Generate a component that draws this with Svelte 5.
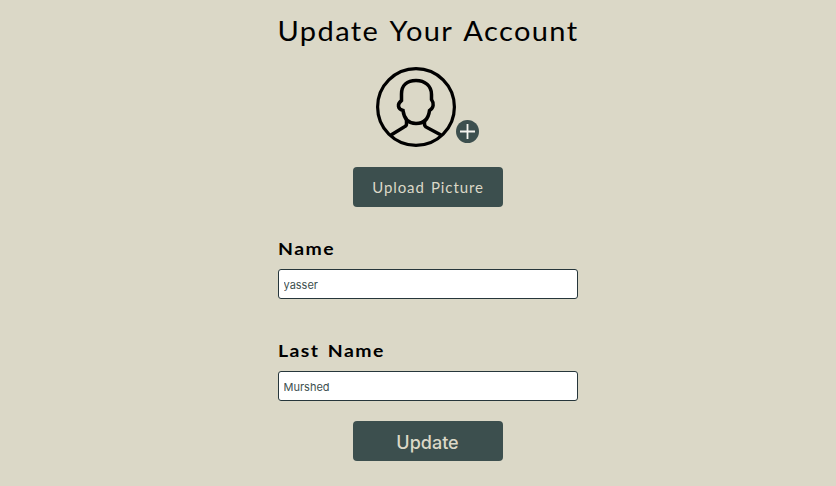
<script>
  let name = $state('yasser');
  let lastName = $state('Murshed');
</script>

<main>
  <h1>Update Your Account</h1>
  <form onsubmit={(e) => e.preventDefault()}>
    <div class="avatar">
      <svg class="person" viewBox="0 0 80 80" aria-hidden="true">
        <circle cx="40" cy="40" r="38.4" />
        <path d="M15 68L28 60Q30.5 59 30.5 57V53" />
        <path d="M65 68L51 60.5Q48.5 59.5 48.5 57V53" />
        <path d="M25.5 33.5V27C25.5 18.5 31 13.5 40 13.5C49 13.5 55.5 19 55.5 27.5V32.5C58 36 58 41 53.5 43.5C52.5 51.5 48 56.5 40 56.5C32 56.5 28 51 27 43.5C21.5 42 21 37 25.5 33.5Z" />
      </svg>
      <svg class="plus" viewBox="0 0 23 23" aria-hidden="true">
        <circle cx="11.5" cy="11.5" r="11.5" />
        <path d="M11.5 4v15M4 11.5h15" />
      </svg>
    </div>
    <button type="button" class="upload">Upload Picture</button>
    <label class="field first"><span>Name</span><input bind:value={name} /></label>
    <label class="field second"><span>Last Name</span><input bind:value={lastName} /></label>
    <button type="submit" class="update">Update</button>
  </form>
</main>

<style>
  :global(body) { margin: 0; background: #dbd8c7; }
  main {
    box-sizing: border-box;
    width: 836px;
    height: 486px;
    padding: 10px 0 0 20px;
    background: #dbd8c7;
    display: flex;
    flex-direction: column;
    align-items: center;
    font-family: Lato, sans-serif;
    color: #000;
  }
  h1 {
    margin: 0;
    height: 57px;
    font-size: 27px;
    line-height: 41px;
    font-weight: 400;
    letter-spacing: 1.3px;
    word-spacing: 2.5px;
    white-space: nowrap;
    transform: scaleX(1.075);
  }
  form { width: 300px; display: flex; flex-direction: column; align-items: center; }
  .avatar { display: flex; align-items: flex-end; height: 80px; width: 104px; }
  svg { display: block; flex: none; }
  .person { width: 80px; height: 80px; fill: none; stroke: #000; stroke-width: 3.2; }
  .person path { stroke-width: 3.5; }
  .plus { width: 23px; height: 23px; margin-bottom: 4px; }
  .plus circle { fill: #3c4f4e; }
  .plus path { stroke: #f5f4ef; stroke-width: 1.8; }
  button {
    width: 150px;
    height: 40px;
    padding: 0;
    border: 0;
    border-radius: 4px;
    background: #3c4f4e;
    color: #dbd8c7;
  }
  .upload { margin-top: 20px; font: 400 15px Lato, sans-serif; letter-spacing: .9px; word-spacing: 1.5px; }
  .field { display: flex; flex-direction: column; width: 300px; }
  .first { margin-top: 30px; }
  .second { margin-top: 40px; }
  .field span {
    width: 200px;
    height: 32px;
    font-size: 17.5px;
    line-height: 24px;
    font-weight: 700;
    letter-spacing: 1.3px;
    word-spacing: 2px;
    transform: scaleX(1.11);
    transform-origin: left;
  }
  input {
    box-sizing: border-box;
    width: 300px;
    height: 30px;
    padding: 2px 4.5px 0;
    border: 1px solid #26363b;
    border-radius: 3px;
    outline: 0;
    background: #fff;
    color: #3c4f4e;
    font: 11px Inter, sans-serif;
  }
  .update { margin-top: 20px; padding: 2px 1px 0 0; font: 500 18px Inter, sans-serif; }
</style>
